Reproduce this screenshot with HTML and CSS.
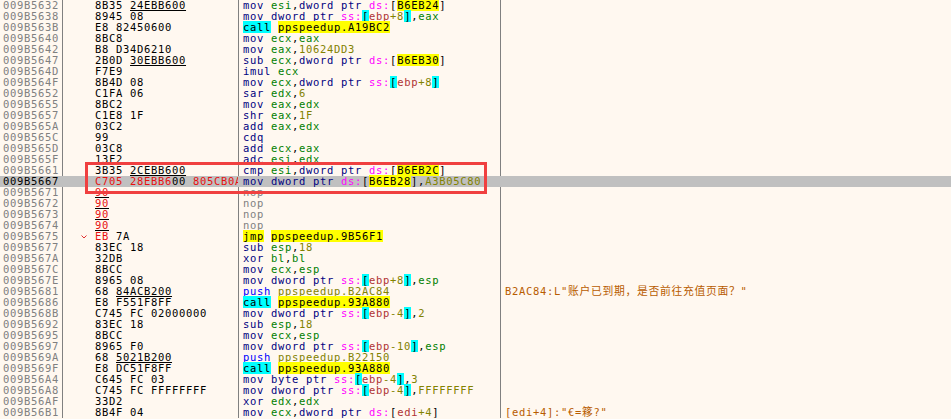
FILE: index.html
```html
<!DOCTYPE html>
<html lang="en">
<head>
<meta charset="utf-8">
<title>Disassembly</title>
<link rel="stylesheet" href="styles.css">
</head>
<body>
<div class="view">
<div class="row"><span class="a">009B5632</span><span class="b">8B35 <u>24EBB600</u></span><span class="d"><i class="o">mov</i> <i class="r">esi</i>,<i class="s">dword ptr</i> <i class="g">ds:</i>[<i class="y">B6EB24</i>]</span><span class="c"></span></div>
<div class="row"><span class="a">009B5638</span><span class="b">8945 08</span><span class="d"><i class="o">mov</i> <i class="s">dword ptr</i> <i class="g">ss:</i><i class="k">[</i><i class="e">ebp</i><i class="n">+8</i><i class="k">]</i>,<i class="r">eax</i></span><span class="c"></span></div>
<div class="row"><span class="a">009B563B</span><span class="b">E8 82450600</span><span class="d"><i class="k">call</i> <i class="y">ppspeedup.A19BC2</i></span><span class="c"></span></div>
<div class="row"><span class="a">009B5640</span><span class="b">8BC8</span><span class="d"><i class="o">mov</i> <i class="r">ecx</i>,<i class="r">eax</i></span><span class="c"></span></div>
<div class="row"><span class="a">009B5642</span><span class="b">B8 D34D6210</span><span class="d"><i class="o">mov</i> <i class="r">eax</i>,<i class="n">10624DD3</i></span><span class="c"></span></div>
<div class="row"><span class="a">009B5647</span><span class="b">2B0D <u>30EBB600</u></span><span class="d"><i class="o">sub</i> <i class="r">ecx</i>,<i class="s">dword ptr</i> <i class="g">ds:</i>[<i class="y">B6EB30</i>]</span><span class="c"></span></div>
<div class="row"><span class="a">009B564D</span><span class="b">F7E9</span><span class="d"><i class="o">imul</i> <i class="r">ecx</i></span><span class="c"></span></div>
<div class="row"><span class="a">009B564F</span><span class="b">8B4D 08</span><span class="d"><i class="o">mov</i> <i class="r">ecx</i>,<i class="s">dword ptr</i> <i class="g">ss:</i><i class="k">[</i><i class="e">ebp</i><i class="n">+8</i><i class="k">]</i></span><span class="c"></span></div>
<div class="row"><span class="a">009B5652</span><span class="b">C1FA 06</span><span class="d"><i class="o">sar</i> <i class="r">edx</i>,<i class="n">6</i></span><span class="c"></span></div>
<div class="row"><span class="a">009B5655</span><span class="b">8BC2</span><span class="d"><i class="o">mov</i> <i class="r">eax</i>,<i class="r">edx</i></span><span class="c"></span></div>
<div class="row"><span class="a">009B5657</span><span class="b">C1E8 1F</span><span class="d"><i class="o">shr</i> <i class="r">eax</i>,<i class="n">1F</i></span><span class="c"></span></div>
<div class="row"><span class="a">009B565A</span><span class="b">03C2</span><span class="d"><i class="o">add</i> <i class="r">eax</i>,<i class="r">edx</i></span><span class="c"></span></div>
<div class="row"><span class="a">009B565C</span><span class="b">99</span><span class="d"><i class="o">cdq</i></span><span class="c"></span></div>
<div class="row"><span class="a">009B565D</span><span class="b">03C8</span><span class="d"><i class="o">add</i> <i class="r">ecx</i>,<i class="r">eax</i></span><span class="c"></span></div>
<div class="row"><span class="a">009B565F</span><span class="b">13F2</span><span class="d"><i class="o">adc</i> <i class="r">esi</i>,<i class="r">edx</i></span><span class="c"></span></div>
<div class="row"><span class="a">009B5661</span><span class="b">3B35 <u>2CEBB600</u></span><span class="d"><i class="o">cmp</i> <i class="r">esi</i>,<i class="s">dword ptr</i> <i class="g">ds:</i>[<i class="y">B6EB2C</i>]</span><span class="c"></span></div>
<div class="row sel"><span class="a">009B5667</span><span class="b"><i class="x">C705 28EBB6</i>00 <i class="x">805CB0A3</i></span><span class="d"><i class="o">mov</i> <i class="s">dword ptr</i> <i class="g">ds:</i>[<i class="y">B6EB28</i>],<i class="n">A3B05C80</i></span><span class="c"></span></div>
<div class="row"><span class="a">009B5671</span><span class="b x"><u>90</u></span><span class="d"><i class="p">nop</i></span><span class="c"></span></div>
<div class="row"><span class="a">009B5672</span><span class="b x"><u>90</u></span><span class="d"><i class="p">nop</i></span><span class="c"></span></div>
<div class="row"><span class="a">009B5673</span><span class="b x"><u>90</u></span><span class="d"><i class="p">nop</i></span><span class="c"></span></div>
<div class="row"><span class="a">009B5674</span><span class="b x"><u>90</u></span><span class="d"><i class="p">nop</i></span><span class="c"></span></div>
<div class="row"><span class="a">009B5675</span><span class="b"><svg class="chev" viewBox="0 0 6 4" width="6" height="4"><path d="M.5.5 3 3 5.5.5" fill="none" stroke="#e03030"/></svg><i class="x">EB</i> 7A</span><span class="d"><i class="y">jmp</i> <i class="y">ppspeedup.9B56F1</i></span><span class="c"></span></div>
<div class="row"><span class="a">009B5677</span><span class="b">83EC 18</span><span class="d"><i class="o">sub</i> <i class="r">esp</i>,<i class="n">18</i></span><span class="c"></span></div>
<div class="row"><span class="a">009B567A</span><span class="b">32DB</span><span class="d"><i class="o">xor</i> <i class="r">bl</i>,<i class="r">bl</i></span><span class="c"></span></div>
<div class="row"><span class="a">009B567C</span><span class="b">8BCC</span><span class="d"><i class="o">mov</i> <i class="r">ecx</i>,<i class="r">esp</i></span><span class="c"></span></div>
<div class="row"><span class="a">009B567E</span><span class="b">8965 08</span><span class="d"><i class="o">mov</i> <i class="s">dword ptr</i> <i class="g">ss:</i><i class="k">[</i><i class="e">ebp</i><i class="n">+8</i><i class="k">]</i>,<i class="r">esp</i></span><span class="c"></span></div>
<div class="row"><span class="a">009B5681</span><span class="b">68 <u>84ACB200</u></span><span class="d"><i class="h">push</i> <i class="n">ppspeedup.B2AC84</i></span><span class="c">B2AC84:L"<i class="cjk">账户已到期，是否前往充值页面？</i>"</span></div>
<div class="row"><span class="a">009B5686</span><span class="b">E8 F551F8FF</span><span class="d"><i class="k">call</i> <i class="y">ppspeedup.93A880</i></span><span class="c"></span></div>
<div class="row"><span class="a">009B568B</span><span class="b">C745 FC 02000000</span><span class="d"><i class="o">mov</i> <i class="s">dword ptr</i> <i class="g">ss:</i><i class="k">[</i><i class="e">ebp</i><i class="n">-4</i><i class="k">]</i>,<i class="n">2</i></span><span class="c"></span></div>
<div class="row"><span class="a">009B5692</span><span class="b">83EC 18</span><span class="d"><i class="o">sub</i> <i class="r">esp</i>,<i class="n">18</i></span><span class="c"></span></div>
<div class="row"><span class="a">009B5695</span><span class="b">8BCC</span><span class="d"><i class="o">mov</i> <i class="r">ecx</i>,<i class="r">esp</i></span><span class="c"></span></div>
<div class="row"><span class="a">009B5697</span><span class="b">8965 F0</span><span class="d"><i class="o">mov</i> <i class="s">dword ptr</i> <i class="g">ss:</i><i class="k">[</i><i class="e">ebp</i><i class="n">-10</i><i class="k">]</i>,<i class="r">esp</i></span><span class="c"></span></div>
<div class="row"><span class="a">009B569A</span><span class="b">68 <u>5021B200</u></span><span class="d"><i class="h">push</i> <i class="n">ppspeedup.B22150</i></span><span class="c"></span></div>
<div class="row"><span class="a">009B569F</span><span class="b">E8 DC51F8FF</span><span class="d"><i class="k">call</i> <i class="y">ppspeedup.93A880</i></span><span class="c"></span></div>
<div class="row"><span class="a">009B56A4</span><span class="b">C645 FC 03</span><span class="d"><i class="o">mov</i> <i class="s">byte ptr</i> <i class="g">ss:</i><i class="k">[</i><i class="e">ebp</i><i class="n">-4</i><i class="k">]</i>,<i class="n">3</i></span><span class="c"></span></div>
<div class="row"><span class="a">009B56A8</span><span class="b">C745 FC FFFFFFFF</span><span class="d"><i class="o">mov</i> <i class="s">dword ptr</i> <i class="g">ss:</i><i class="k">[</i><i class="e">ebp</i><i class="n">-4</i><i class="k">]</i>,<i class="n">FFFFFFFF</i></span><span class="c"></span></div>
<div class="row"><span class="a">009B56AF</span><span class="b">33D2</span><span class="d"><i class="o">xor</i> <i class="r">edx</i>,<i class="r">edx</i></span><span class="c"></span></div>
<div class="row"><span class="a">009B56B1</span><span class="b">8B4F 04</span><span class="d"><i class="o">mov</i> <i class="r">ecx</i>,<i class="s">dword ptr</i> <i class="g">ds:</i>[<i class="e">edi</i><i class="n">+4</i>]</span><span class="c">[edi+4]:"€=<i class="cjk">簃</i>?"</span></div>
<div class="mark"></div>
</div>
</body>
</html>
```
FILE: styles.css
```css
html, body {
  margin: 0;
  padding: 0;
  background: #fff8f0;
}
.view {
  position: relative;
  width: 951px;
  height: 419px;
  overflow: hidden;
  font-family: "DejaVu Sans Mono", "Noto Sans CJK SC", monospace;
  font-size: 10.5px;
  letter-spacing: 0.68px;
  color: #000;
}
.row {
  display: grid;
  grid-template-columns: 63px 176px 262px 1fr;
  height: 11px;
  line-height: 11px;
  white-space: pre;
}
.row i { font-style: normal; }
.a, .b, .d, .c { overflow-x: clip; height: 11px; }
.a { color: #808080; padding-left: 3px; border-right: 1px solid #808080; }
.b { padding-left: 32px; border-right: 1px solid #808080; position: relative; }
.d { padding-left: 4px; color: #000; border-right: 1px solid #808080; }
.c { padding-left: 4px; color: #b85c00; }
.sel { background: #c0c0c0; }
.sel .a { color: #000; }
.sel .a, .sel .b, .sel .d { border-right-color: #c0c0c0; }
.x { color: #e81010; }
.b u { text-decoration-color: #000; text-decoration-thickness: 1px; text-underline-offset: 1px; text-decoration-skip-ink: none; }
.o { color: #000080; }
.r { color: #008000; }
.s { color: #000080; }
.g { color: #ff00ff; }
.y { background: #ffff00; color: #000; }
.k { background: #00ffff; color: #000; }
.e { color: #b03434; }
.n { color: #828200; }
.p { color: #808080; }
.h { color: #0000ff; }
.cjk { font-size: 10.82px; }
.chev { position: absolute; left: 18px; top: 4px; }
.mark {
  position: absolute;
  left: 85px;
  top: 162px;
  width: 396px;
  height: 26px;
  border: 3px solid #f04040;
}
```
